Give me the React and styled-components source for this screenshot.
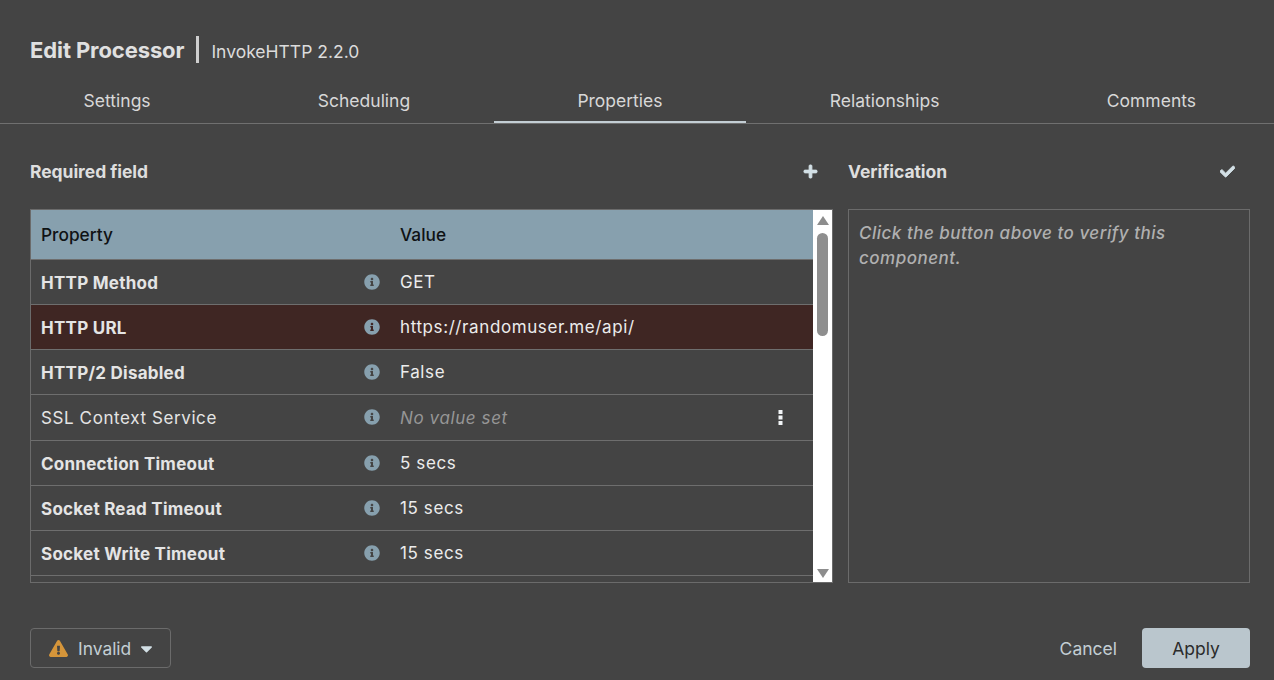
import React from "react";
import styled, { createGlobalStyle } from "styled-components";
import {
  FaCaretDown,
  FaCheck,
  FaExclamationTriangle,
  FaInfoCircle,
  FaPlus,
} from "react-icons/fa";

const GlobalStyle = createGlobalStyle`
  html, body {
    margin: 0;
    height: 100%;
    background: #444444;
    overflow: hidden;
  }
  body {
    font-family: Inter, "Liberation Sans", sans-serif;
    color: #e3e3e3;
  }
`;

const Dialog = styled.div`
  width: 1274px;
  height: 680px;
  display: flex;
  flex-direction: column;
  background: #444444;
  overflow: hidden;
`;

const TitleBar = styled.div`
  height: 80px;
  box-sizing: border-box;
  padding: 36px 24px 0 30px;
  display: flex;
  align-items: flex-start;
`;

const Title = styled.h1`
  margin: 0;
  font-size: 22px;
  line-height: 28px;
  font-weight: 700;
  letter-spacing: -0.1px;
  color: #e0e0e0;
`;

const Divider = styled.span`
  width: 3px;
  height: 27px;
  margin: 0 12px 0 12px;
  background: #cfcfcf;
`;

const Subtitle = styled.span`
  font-size: 17.5px;
  line-height: 32px;
  color: #dcdcdc;
`;

const Tabs = styled.nav`
  display: flex;
  height: 44px;
  border-bottom: 1px solid #707070;
`;

const Tab = styled.div`
  flex: none;
  white-space: nowrap;
  height: 44px;
  box-sizing: border-box;
  padding: 11px 83.6px 0;
  font-size: 17.5px;
  line-height: 22px;
  color: #d8d8d8;
  border-bottom: 2px solid ${(p) => (p.$active ? "#c3ced4" : "transparent")};
`;

const Body = styled.main`
  flex: 1;
  display: grid;
  grid-template-columns: 803px 402px;
  column-gap: 15px;
  padding: 0 24px 0 30px;
`;

const Column = styled.section`
  display: flex;
  flex-direction: column;
`;

const SectionHead = styled.div`
  height: 85px;
  box-sizing: border-box;
  padding: 37px 15px 0 0;
  display: flex;
  justify-content: space-between;
  align-items: flex-start;
  font-size: 17.5px;
  line-height: 22px;
  font-weight: 700;
  letter-spacing: -0.05px;
  color: #dedede;
  svg {
    margin-top: 3px;
    color: #d3e0e6;
    font-size: 15px;
    stroke: currentColor;
    stroke-width: 30;
  }
`;

const TableFrame = styled.div`
  height: 374px;
  box-sizing: border-box;
  display: flex;
  border: 1px solid #6b6b6b;
  overflow: hidden;
`;

const TableBody = styled.div`
  flex: 1;
  min-width: 0;
`;

const Row = styled.div`
  display: grid;
  grid-template-columns: 369px 1fr 40px;
  align-items: center;
  box-sizing: border-box;
  height: ${(p) => p.$height || 45}px;
  padding-top: 1px;
  border-bottom: 1px solid #6e6e6e;
  background: ${(p) => (p.$error ? "#3f2623" : "transparent")};
  font-size: 17px;
`;

const HeadRow = styled(Row)`
  height: 50px;
  padding-top: 0;
  padding-bottom: 1px;
  background: #87a0ae;
  color: #0f1214;
  font-weight: 500;
  font-size: 17.3px;
`;

const HeadName = styled.div`
  padding-left: 10px;
`;

const NameCell = styled.div`
  display: flex;
  justify-content: space-between;
  align-items: center;
  padding: 0 20px 0 10px;
  font-weight: ${(p) => (p.$required ? 700 : 400)};
  letter-spacing: ${(p) => (p.$required ? "0.25px" : "0.6px")};
  color: #e4e4e4;
  svg {
    color: #87a0ae;
    font-size: 16px;
    flex: none;
    margin-top: -2px;
  }
`;

const ValueCell = styled.div`
  letter-spacing: 0.6px;
  color: ${(p) => (p.$empty ? "#969696" : "#ececec")};
  font-style: ${(p) => (p.$empty ? "italic" : "normal")};
  margin-top: ${(p) => (p.$empty ? "0" : "-2px")};
`;

const MenuCell = styled.div`
  display: flex;
  padding: 0 0 2px 5px;
  color: #f2f5f7;
`;

const Scrollbar = styled.div`
  flex: none;
  width: 19px;
  display: flex;
  flex-direction: column;
  align-items: center;
  background: #ffffff;
`;

const ArrowUp = styled.div`
  margin-top: 6px;
  width: 0;
  height: 0;
  border-left: 6.5px solid transparent;
  border-right: 6.5px solid transparent;
  border-bottom: 9px solid #8d8d8d;
`;

const ArrowDown = styled.div`
  margin-top: auto;
  margin-bottom: 4px;
  width: 0;
  height: 0;
  border-left: 6.5px solid transparent;
  border-right: 6.5px solid transparent;
  border-top: 9px solid #8d8d8d;
`;

const Thumb = styled.div`
  margin-top: 8px;
  width: 11px;
  height: 103px;
  border-radius: 6px;
  background: #8e8e8e;
`;

const VerifyPanel = styled.div`
  height: 374px;
  box-sizing: border-box;
  padding: 11px 10px;
  border: 1px solid #6b6b6b;
  font-size: 17px;
  line-height: 25px;
  font-weight: 500;
  font-style: italic;
  letter-spacing: 0.5px;
  color: #b0b0b0;
`;

const Footer = styled.footer`
  height: 97px;
  box-sizing: border-box;
  padding: 45px 24px 12px 30px;
  display: flex;
  align-items: stretch;
  justify-content: space-between;
`;

const StatusButton = styled.div`
  width: 141px;
  box-sizing: border-box;
  display: flex;
  align-items: center;
  padding-left: 18px;
  border: 1px solid #6b6b6b;
  border-radius: 4px;
  font-size: 17.4px;
  color: #c3ced4;
  svg:first-child {
    color: #d5953a;
    font-size: 19px;
    margin-right: 10px;
  }
  svg:last-child {
    color: #d3e0e6;
    font-size: 19px;
    margin-left: 6px;
  }
`;

const Actions = styled.div`
  display: flex;
  align-items: stretch;
  gap: 25px;
`;

const CancelButton = styled.div`
  display: flex;
  align-items: center;
  font-size: 17.5px;
  color: #c3ced4;
`;

const ApplyButton = styled.div`
  width: 108px;
  display: flex;
  align-items: center;
  justify-content: center;
  border-radius: 4px;
  background: #bac6cd;
  font-size: 17.5px;
  color: #2b2b2b;
`;

const tabs = ["Settings", "Scheduling", "Properties", "Relationships", "Comments"];

const rows = [
  { name: "HTTP Method", value: "GET", required: true },
  { name: "HTTP URL", value: "https://randomuser.me/api/", required: true, error: true },
  { name: "HTTP/2 Disabled", value: "False", required: true },
  { name: "SSL Context Service", value: "No value set", empty: true, menu: true, height: 46 },
  { name: "Connection Timeout", value: "5 secs", required: true },
  { name: "Socket Read Timeout", value: "15 secs", required: true },
  { name: "Socket Write Timeout", value: "15 secs", required: true },
];

// three square dots, the rounded package icon does not match
const DotsIcon = () => (
  <svg width="5" height="15" viewBox="0 0 5 15" fill="currentColor">
    <rect x="0.5" y="0" width="4" height="4" />
    <rect x="0.5" y="5.5" width="4" height="4" />
    <rect x="0.5" y="11" width="4" height="4" />
  </svg>
);

export default function App() {
  return (
    <Dialog>
      <GlobalStyle />
      <TitleBar>
        <Title>Edit Processor</Title>
        <Divider />
        <Subtitle>InvokeHTTP 2.2.0</Subtitle>
      </TitleBar>
      <Tabs>
        {tabs.map((t) => (
          <Tab key={t} $active={t === "Properties"}>
            {t}
          </Tab>
        ))}
      </Tabs>
      <Body>
        <Column>
          <SectionHead>
            <span>Required field</span>
            <FaPlus />
          </SectionHead>
          <TableFrame>
            <TableBody>
              <HeadRow>
                <HeadName>Property</HeadName>
                <div>Value</div>
              </HeadRow>
              {rows.map((r) => (
                <Row key={r.name} $error={r.error} $height={r.height}>
                  <NameCell $required={r.required}>
                    {r.name}
                    <FaInfoCircle />
                  </NameCell>
                  <ValueCell $empty={r.empty}>{r.value}</ValueCell>
                  <MenuCell>{r.menu && <DotsIcon />}</MenuCell>
                </Row>
              ))}
            </TableBody>
            <Scrollbar>
              <ArrowUp />
              <Thumb />
              <ArrowDown />
            </Scrollbar>
          </TableFrame>
        </Column>
        <Column>
          <SectionHead>
            <span>Verification</span>
            <FaCheck />
          </SectionHead>
          <VerifyPanel>
            Click the button above to verify this component.
          </VerifyPanel>
        </Column>
      </Body>
      <Footer>
        <StatusButton>
          <FaExclamationTriangle />
          Invalid
          <FaCaretDown />
        </StatusButton>
        <Actions>
          <CancelButton>Cancel</CancelButton>
          <ApplyButton>Apply</ApplyButton>
        </Actions>
      </Footer>
    </Dialog>
  );
}
